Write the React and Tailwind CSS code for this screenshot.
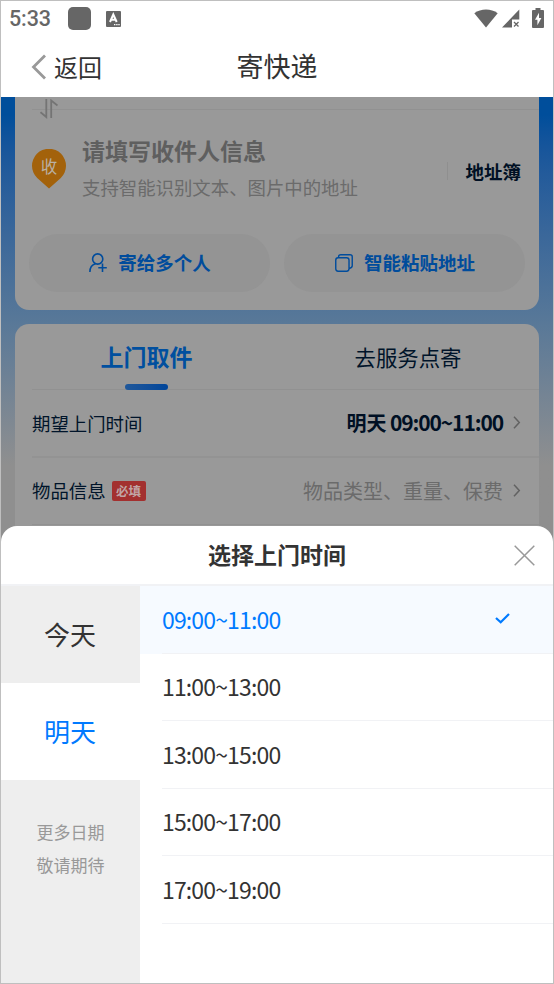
import { useState } from 'react';

const days = ['今天', '明天'];
const slots = ['09:00~11:00', '11:00~13:00', '13:00~15:00', '15:00~17:00', '17:00~19:00'];

function StatusBar() {
  return (
    <div className="flex h-[35px] items-center px-[9px] text-[#666666]">
      <span className="-ml-px w-[59px] font-[Roboto,sans-serif] text-[21.5px] font-medium leading-[37px] tracking-[-0.1px]">5:33</span>
      <span className="h-[23px] w-[23px] rounded-[5px] bg-[#666666]" />
      <svg className="ml-[15px]" width="15" height="16" viewBox="0 0 15 16">
        <rect width="15" height="16" rx="1" fill="#666" />
        <path d="M4 11 7.3 3.5 10.7 11M5.2 8.8h4.2" fill="none" stroke="#fff" strokeWidth="2" />
        <path d="M8 13.7h1.4M10.2 13.7h1.4M12.3 13.7h1.4" stroke="#fff" strokeWidth="1.2" />
      </svg>
      <svg className="-mt-px ml-auto" width="24" height="19" viewBox="0 0 24 19" fill="#666">
        <path d="M0.3 4.2C7 -0.8 17 -0.8 23.7 4.2L12 18.5Z" />
      </svg>
      <svg className="ml-[4px]" width="18" height="19" viewBox="0 0 18 19" fill="#666">
        <path d="M17.3 0.5V10.5H10V18.5H0Z" />
        <path d="M12 13l4.5 4.5M16.5 13L12 17.5" stroke="#666" strokeWidth="1.3" />
      </svg>
      <svg className="-mt-[2px] ml-[12px]" width="12" height="20" viewBox="0 0 12 20">
        <path d="M3.5 0h5v2H11q1 0 1 1v16q0 1-1 1H1q-1 0-1-1V3q0-1 1-1h2.5z" fill="#666" />
        <path d="M7 4.8 3 11.8h2.4v5.5L9.4 10H7z" fill="#fff" />
      </svg>
    </div>
  );
}

function NavBar() {
  return (
    <div className="grid h-[61px] grid-cols-3 items-center text-[#333333]">
      <button className="flex items-center pl-[30px] text-[24px] leading-[34px]">
        <svg className="mr-[8px]" width="15" height="26" viewBox="0 0 15 26">
          <path d="M14 1.5 2.500 13l11.5 11.5" fill="none" stroke="#999" strokeWidth="2.8" />
        </svg>
        返回
      </button>
      <h1 className="pb-px text-center text-[27px] leading-[34px]">寄快递</h1>
    </div>
  );
}

function Chevron() {
  return (
    <svg className="-mt-px ml-[10px]" width="8" height="13" viewBox="0 0 8 13">
      <path d="M1 0.7 6.3 6.5 1 12.3" fill="none" stroke="#626262" strokeWidth="1.5" />
    </svg>
  );
}

function AddressCard() {
  return (
    <div className="mx-[14px] h-[213px] rounded-b-[14px] bg-[#999999]">
      <div className="relative ml-[17px] h-[13px] border-b border-[#919191]">
        <svg className="absolute left-[8px] top-[2px]" width="18" height="20" viewBox="0 0 18 20">
          <path d="M6.3 0v18L0.5 13.2M11.2 19V1.5L17.5 6.5" fill="none" stroke="#747474" strokeWidth="1.8" />
        </svg>
      </div>
      <div className="flex h-[124px] items-center pl-[17px] pr-[18px] pt-[5px]">
        <svg className="-mt-[12px]" width="34" height="40" viewBox="0 0 34 40">
          <path d="M17 39.5 5.2 29A17 17 0 1 1 28.8 29Z" fill="#a3620b" />
          <text x="17" y="23.5" textAnchor="middle" fontSize="16.5" fill="#b9b0a4" fontFamily="Noto Sans CJK SC, sans-serif">收</text>
        </svg>
        <div className="-mt-[12px] ml-[16px]">
          <div className="text-[23px] font-bold leading-[36px] text-[#5f5f5f]">请填写收件人信息</div>
          <div className="mt-px text-[18.4px] leading-[36px] text-[#6b6b6b]">支持智能识别文本、图片中的地址</div>
        </div>
        <div className="-mt-[8px] ml-auto flex items-center">
          <span className="mr-[17px] h-[18px] w-[1.5px] bg-[#8f8f8f]" />
          <span className="text-[18.5px] font-bold leading-[26px] text-[#001024]">地址簿</span>
        </div>
      </div>
      <div className="ml-[14px] flex gap-[14px] text-[18.5px] font-bold text-[#004c9c]">
        <button className="flex h-[58px] w-[241px] items-center justify-center rounded-full bg-[#949494] pl-px">
          <svg className="-mt-[2px] mr-[11px]" width="18" height="19" viewBox="0 0 18 19" fill="none" stroke="#004c9c" strokeWidth="1.6">
            <circle cx="8.7" cy="6" r="5.1" />
            <path d="M0.9 19C0.9 14 3.3 11.600 6.500 10.800M9.300 14.800H17.800M13.500 10.500v8.500" />
          </svg>
          寄给多个人
        </button>
        <button className="flex h-[58px] w-[241px] items-center justify-center rounded-full bg-[#949494] pl-px">
          <svg className="mr-[11px]" width="18" height="18" viewBox="0 0 19 19" fill="none" stroke="#004c9c" strokeWidth="1.5">
            <rect x="0.8" y="4" width="14" height="14.2" rx="2.5" />
            <path d="M3.8 4V3Q3.8 0.8 6 0.8h10Q18.2 0.8 18.2 3v9.5Q18.2 15 14.8 15" />
          </svg>
          智能粘贴地址
        </button>
      </div>
    </div>
  );
}

function ServiceCard() {
  return (
    <div className="mx-[14px] mt-[14px] h-[230px] rounded-t-[14px] bg-[#999999] pl-[17px] text-[#00142a]">
      <div className="flex h-[66px] border-b-[1.5px] border-[#919191]">
        <div className="flex w-[229px] flex-col items-center text-[23px] font-bold text-[#004f9f]">
          <span className="h-[60px] leading-[64px]">上门取件</span>
          <span className="h-[6px] w-[43px] shrink-0 rounded-full bg-linear-to-r from-[#20589a] to-[#00459a]" />
        </div>
        <div className="ml-[17px] w-[260px] text-center text-[21.4px] leading-[65px]">去服务点寄</div>
      </div>
      <div className="flex h-[68px] items-center border-b-2 border-[#939393] pr-[18px]">
        <span className="pt-px text-[18.4px]">期望上门时间</span>
        <span className="ml-auto text-[20px] font-bold text-[#001024]">
          明天 <span className="-ml-px text-[21px] tracking-[-1.1px]">09:00~11:00</span>
        </span>
        <Chevron />
      </div>
      <div className="flex h-[67px] items-center border-b border-[#919191] pr-[18px]">
        <span className="text-[18.4px]">物品信息</span>
        <span className="ml-[6px] h-[20px] w-[34px] rounded-[2px] bg-[#a3302f] text-center text-[12.5px] font-bold leading-[19px] text-[#c0a5a5]">必填</span>
        <span className="ml-auto text-[20px] text-[#6b6b6b]">物品类型、重量、保费</span>
        <Chevron />
      </div>
    </div>
  );
}

function TimeSheet() {
  const [day, setDay] = useState('明天');
  const [slot, setSlot] = useState('09:00~11:00');

  return (
    <div className="relative -mt-[20px] flex h-[457px] flex-col overflow-hidden rounded-t-[16px] bg-white text-[#333333]">
      <div className="flex h-[60px] shrink-0 items-center border-b-2 border-[#f1f2f5]">
        <h2 className="w-full pb-[2px] text-center text-[23px] font-bold">选择上门时间</h2>
        <button className="-ml-[39px] mr-[18px] shrink-0">
          <svg width="21" height="21" viewBox="0 0 21 21">
            <path d="M0.7 0.7l19.6 19.6M20.3 0.7L0.7 20.3" stroke="#999" strokeWidth="1.5" />
          </svg>
        </button>
      </div>
      <div className="flex flex-1">
        <div className="w-[139px] bg-[#eeeeee] text-center">
          {days.map((d) => (
            <button
              key={d}
              onClick={() => setDay(d)}
              className={`block h-[97px] w-full pb-[2px] pr-px text-[26px] ${d === day ? 'bg-white text-[#007aff]' : ''}`}
            >
              {d}
            </button>
          ))}
          <p className="mt-[36px] text-[17px] leading-[32.5px] text-[#999999]">
            更多日期
            <br />
            敬请期待
          </p>
        </div>
        <div className="flex-1">
          {slots.map((s) => (
            <button
              key={s}
              onClick={() => setSlot(s)}
              className={`block h-[67.6px] w-full pl-[22px] text-[23px] tracking-[-0.85px] ${s === slot ? 'bg-[#f6faff] text-[#007aff]' : ''}`}
            >
              <span className="flex h-full items-center justify-between border-b-[1.5px] border-[#f1f2f5] pb-px pr-[43px]">
                {s}
                {s === slot && (
                  <svg width="15" height="11" viewBox="0 0 15 11">
                    <path d="M1 5l4.7 4.3L14 1" fill="none" stroke="#007aff" strokeWidth="2.2" />
                  </svg>
                )}
              </span>
            </button>
          ))}
        </div>
      </div>
    </div>
  );
}

export default function App() {
  return (
    <div className="h-[984px] w-[554px] overflow-hidden border border-[#bfbfbf] bg-white font-['Noto_Sans_CJK_SC',sans-serif]">
      <StatusBar />
      <NavBar />
      <div className="h-[449px] overflow-hidden bg-linear-to-b from-[#004e9b] from-4% via-[#587898] via-50% to-[#8f8f8f] to-82%">
        <AddressCard />
        <ServiceCard />
      </div>
      <TimeSheet />
    </div>
  );
}
